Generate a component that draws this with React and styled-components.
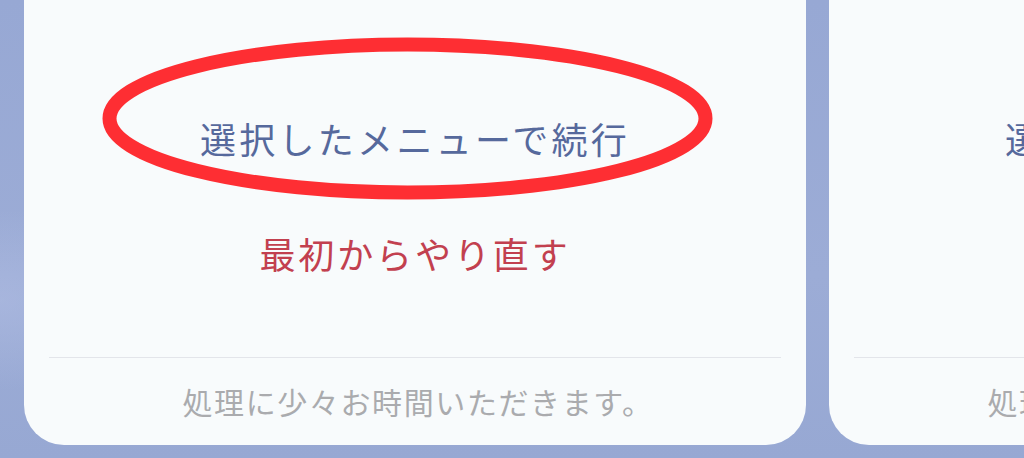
import React from "react";
import styled, { createGlobalStyle } from "styled-components";

const Global = createGlobalStyle`
  html, body { margin: 0; padding: 0; }
  body {
    width: 1024px;
    height: 458px;
    overflow: hidden;
    font-family: "Noto Sans CJK JP", "Noto Sans", sans-serif;
  }
`;

const Page = styled.div`
  position: relative;
  box-sizing: border-box;
  width: 1024px;
  height: 458px;
  overflow: hidden;
  display: flex;
  align-items: flex-end;
  gap: 23px;
  padding: 0 0 13px 24px;
  background:
    radial-gradient(ellipse 160px 90px at 0px 300px, rgba(175, 188, 226, 0.6), rgba(175, 188, 226, 0) 100%),
    linear-gradient(180deg, #97a8d4 0%, #9cacd6 60%, #97a8d3 100%);
`;

const Card = styled.div`
  flex: 0 0 782px;
  height: 470px;
  box-sizing: border-box;
  background: #f8fbfc;
  border-radius: 0 0 40px 40px;
  display: flex;
  flex-direction: column;
`;

const Actions = styled.div`
  display: flex;
  flex-direction: column;
  align-items: center;
  gap: 43px;
  padding: 127px 0 68px;
`;

const ActionButton = styled.button`
  height: 72px;
  border: none;
  background: transparent;
  padding: 0;
  font-family: "Noto Sans CJK JP", "Noto Sans", sans-serif;
  font-size: 36px;
  font-weight: 400;
  letter-spacing: ${(p) => (p.$danger ? "2.9px" : "3.3px")};
  color: ${(p) => (p.$danger ? "#c2404f" : "#56699c")};
  display: flex;
  align-items: center;
  justify-content: center;
  cursor: pointer;
`;

const Divider = styled.div`
  height: 1px;
  margin: 0 25px;
  background: #e3e5ea;
`;

const Footer = styled.div`
  flex: 1;
  display: flex;
  align-items: center;
  justify-content: center;
  font-size: 30px;
  letter-spacing: 1.6px;
  color: #aaabae;
  padding: 0 0 2px 6px;
`;

const Annotation = styled.svg`
  position: absolute;
  left: 0;
  top: 0;
  pointer-events: none;
`;

function DialogCard() {
  return (
    <Card>
      <Actions>
        <ActionButton>選択したメニューで続行</ActionButton>
        <ActionButton $danger>最初からやり直す</ActionButton>
      </Actions>
      <Divider />
      <Footer>処理に少々お時間いただきます。</Footer>
    </Card>
  );
}

export default function App() {
  return (
    <>
      <Global />
      <Page>
        <DialogCard />
        <DialogCard />
        <Annotation width="1024" height="458" viewBox="0 0 1024 458">
          <ellipse cx="407.5" cy="118.5" rx="298" ry="74" fill="none" stroke="#fe2e33" strokeWidth="14" />
        </Annotation>
      </Page>
    </>
  );
}
